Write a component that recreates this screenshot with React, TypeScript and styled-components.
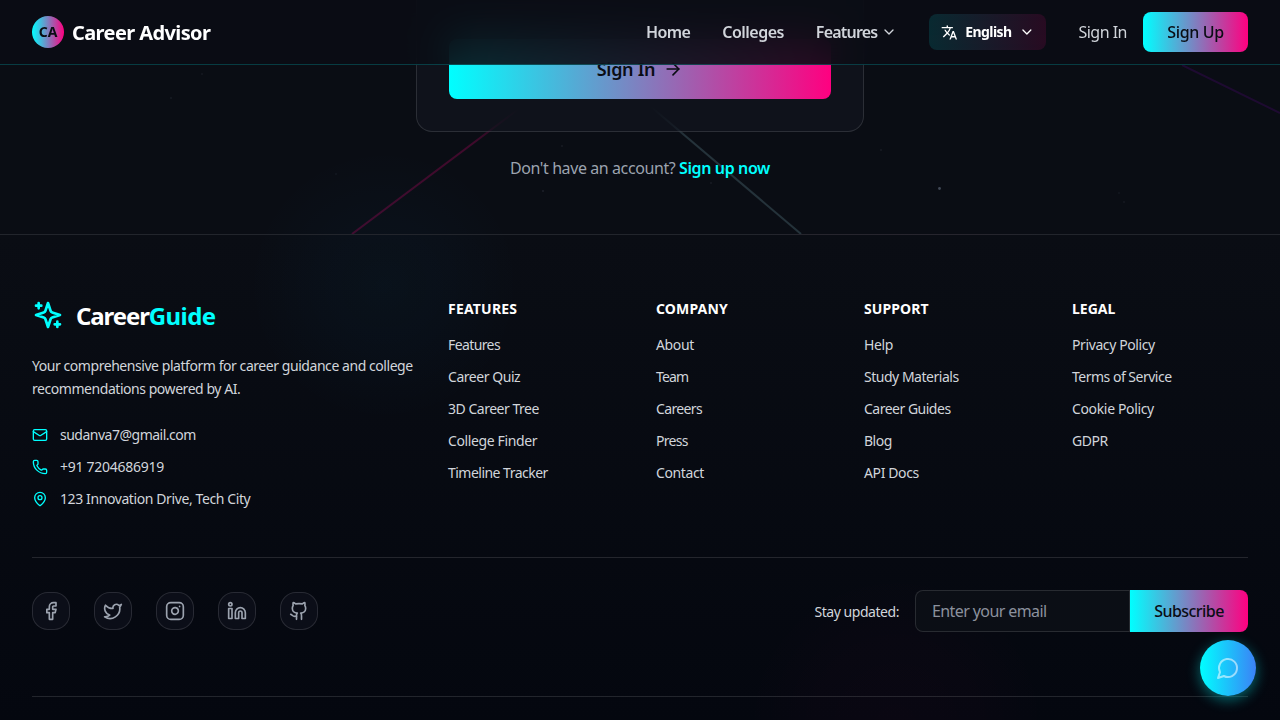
import React from "react";
import styled, { createGlobalStyle } from "styled-components";
import {
  ArrowRight,
  ChevronDown,
  Facebook,
  Github,
  Instagram,
  Linkedin,
  Mail,
  MapPin,
  Phone,
  Twitter,
} from "lucide-react";
import { MdTranslate } from "react-icons/md";

const Global = createGlobalStyle`
  *, *::before, *::after { box-sizing: border-box; }
  html, body { margin: 0; padding: 0; background: #0a0d14; }
  body {
    height: 720px;
    overflow: hidden;
    font-family: "Segoe UI", "Noto Sans", "Open Sans", sans-serif;
    color: #fff;
  }
  a { color: inherit; text-decoration: none; }
  button, input { font-family: inherit; }
  ul { list-style: none; margin: 0; padding: 0; }
  h3, p { margin: 0; }
`;

const gradient = "linear-gradient(90deg, #00ffff, #ff0080)";

const T = styled.span<{ $ls?: number }>`
  letter-spacing: ${(p) => p.$ls ?? 0}px;
  white-space: nowrap;
`;

const Page = styled.div`
  position: relative;
  height: 720px;
  overflow: hidden;
  display: flex;
  flex-direction: column;
  background: #0a0d14;
`;

const Header = styled.header`
  position: relative;
  z-index: 5;
  flex: none;
  height: 65px;
  padding: 0 32px;
  display: flex;
  align-items: center;
  justify-content: space-between;
  background: rgba(10, 13, 20, 0.88);
  backdrop-filter: blur(20px);
  border-bottom: 1px solid rgba(0, 255, 255, 0.2);
`;

const Brand = styled.a`
  display: flex;
  align-items: center;
  gap: 8px;
  font-size: 20px;
  font-weight: 700;
  line-height: 28px;
  > span:last-child { padding-top: 2px; }
`;

const Monogram = styled.span`
  width: 32px;
  height: 32px;
  border-radius: 50%;
  display: flex;
  align-items: center;
  justify-content: center;
  background: ${gradient};
  color: #0a0d14;
  font-size: 14px;
`;

const Nav = styled.nav`
  display: flex;
  align-items: center;
`;

const NavLink = styled.a`
  display: flex;
  align-items: center;
  gap: 4px;
  margin-right: 32px;
  font-size: 16px;
  line-height: 24px;
  font-weight: 600;
  color: #d1d5db;
`;

const Language = styled.button`
  width: 117px;
  height: 36px;
  padding: 0 12px;
  border: 0;
  border-radius: 8px;
  display: flex;
  align-items: center;
  gap: 7px;
  color: #fff;
  font-size: 14px;
  font-weight: 700;
  background: linear-gradient(90deg, rgba(0, 255, 255, 0.12), rgba(255, 0, 128, 0.12));
  > span { padding-bottom: 1px; }
  svg:last-child { margin-left: auto; }
`;

const SignInLink = styled.a`
  margin: 0 16px 0 32px;
  font-size: 16px;
  color: #d1d5db;
`;

const SignUp = styled.a`
  width: 105px;
  height: 40px;
  border-radius: 8px;
  display: flex;
  align-items: center;
  justify-content: center;
  background: ${gradient};
  color: #0a0d14;
  font-size: 16px;
  font-weight: 500;
`;

const Hero = styled.main`
  position: relative;
  flex: none;
  height: 169px;
  display: flex;
  flex-direction: column;
  align-items: center;
`;

const Backdrop = styled.svg`
  position: absolute;
  left: 0;
  top: 0;
`;

const Card = styled.section`
  position: relative;
  flex: none;
  width: 448px;
  height: 152px;
  margin-top: -85px;
  padding: 0 32px 32px;
  display: flex;
  align-items: flex-end;
  border: 1px solid rgba(255, 255, 255, 0.12);
  border-radius: 0 0 16px 16px;
  background: rgba(19, 21, 31, 0.6);
`;

const SignInButton = styled.button`
  width: 100%;
  height: 60px;
  border: 0;
  border-radius: 8px;
  display: flex;
  align-items: center;
  justify-content: center;
  gap: 8px;
  background: ${gradient};
  color: #0a0d14;
  font-size: 18px;
  font-weight: 600;
`;

const AccountLine = styled.p`
  position: relative;
  margin-top: 24px;
  font-size: 16px;
  line-height: 24px;
  color: #9ca3af;
  a { color: #00ffff; font-weight: 600; }
`;

const Footer = styled.footer`
  position: relative;
  flex: 1;
  border-top: 1px solid rgba(255, 255, 255, 0.12);
  padding: 64px 32px 0;
  background:
    radial-gradient(circle 136px at 384px 50px, rgba(0, 160, 255, 0.035), rgba(0, 160, 255, 0.02) 50%, transparent),
    radial-gradient(circle 150px at 896px 490px, rgba(255, 0, 128, 0.025), rgba(255, 0, 128, 0.015) 55%, transparent),
    linear-gradient(180deg, #0a0d14, #04070f);
`;

const Columns = styled.div`
  display: grid;
  grid-template-columns: 384px repeat(4, 176px);
  column-gap: 32px;
  height: 258px;
`;

const FooterBrand = styled.div`
  display: flex;
  align-items: center;
  gap: 12px;
  height: 32px;
  font-size: 24px;
  line-height: 32px;
  font-weight: 700;
  > span { padding-top: 2px; }
  em { font-style: normal; color: #00ffff; letter-spacing: -0.6px; }
`;

const Blurb = styled.p`
  margin-top: 23px;
  font-size: 14px;
  line-height: 23px;
  color: #d1d5db;
`;

const Contacts = styled.ul`
  margin-top: 25px;
  display: flex;
  flex-direction: column;
  gap: 12px;
`;

const Contact = styled.li`
  display: flex;
  align-items: center;
  gap: 12px;
  height: 20px;
  font-size: 14px;
  line-height: 18px;
  color: #d1d5db;
  svg { color: #00ffff; }
  span { padding-bottom: 1px; }
`;

const ColumnTitle = styled.h3`
  font-size: 14px;
  line-height: 20px;
  font-weight: 700;
  color: #fff;
`;

const Links = styled.ul`
  margin-top: 16px;
  display: flex;
  flex-direction: column;
  gap: 12px;
`;

const LinkItem = styled.li`
  height: 20px;
  font-size: 14px;
  line-height: 20px;
  color: #d1d5db;
`;

const SocialRow = styled.div`
  display: flex;
  align-items: center;
  justify-content: space-between;
  height: 139px;
  padding: 32px 0 64px;
  border-top: 1px solid rgba(255, 255, 255, 0.12);
`;

const Socials = styled.div`
  display: flex;
  gap: 24px;
`;

const Social = styled.a`
  width: 38px;
  height: 38px;
  border-radius: 16px;
  border: 1px solid rgba(255, 255, 255, 0.12);
  background: rgba(17, 19, 31, 0.5);
  display: flex;
  align-items: center;
  justify-content: center;
  color: #9ca3af;
`;

const Newsletter = styled.form`
  display: flex;
  align-items: center;
  font-size: 14px;
  color: #d1d5db;
`;

const Email = styled.input`
  width: 215px;
  height: 42px;
  margin-left: 16px;
  padding: 0 16px;
  border: 1px solid rgba(255, 255, 255, 0.12);
  border-radius: 8px 0 0 8px;
  background: #0b0e15;
  font-size: 16px;
  color: #fff;
  letter-spacing: -0.6px;
  &::placeholder { color: #8b919d; opacity: 1; }
`;

const Subscribe = styled.button`
  width: 118px;
  height: 42px;
  padding: 0;
  border: 0;
  border-radius: 0 8px 8px 0;
  background: ${gradient};
  color: #0a0d14;
  font-size: 16px;
  font-weight: 500;
`;

const Divider = styled.div`
  height: 1px;
  background: rgba(255, 255, 255, 0.12);
`;

const ChatButton = styled.button`
  position: absolute;
  z-index: 6;
  right: 24px;
  bottom: 24px;
  width: 56px;
  height: 56px;
  padding: 0;
  border: 0;
  border-radius: 50%;
  display: flex;
  align-items: center;
  justify-content: center;
  color: rgba(255, 255, 255, 0.55);
  background: linear-gradient(90deg, #00ffff, #3b82f6);
  box-shadow: 0 4px 14px rgba(0, 255, 255, 0.4);
`;

const groups: { title: string; ls: number; links: [string, number][] }[] = [
  {
    title: "FEATURES",
    ls: 0.2,
    links: [["Features", -0.6], ["Career Quiz", -0.45], ["3D Career Tree", -0.48], ["College Finder", -0.38], ["Timeline Tracker", -0.52]],
  },
  {
    title: "COMPANY",
    ls: 0.15,
    links: [["About", -0.35], ["Team", -0.85], ["Careers", -0.65], ["Press", -0.7], ["Contact", -0.38]],
  },
  {
    title: "SUPPORT",
    ls: 0.1,
    links: [["Help", -0.4], ["Study Materials", -0.48], ["Career Guides", -0.5], ["Blog", -0.5], ["API Docs", -0.38]],
  },
  {
    title: "LEGAL",
    ls: 0,
    links: [["Privacy Policy", -0.4], ["Terms of Service", -0.5], ["Cookie Policy", -0.35], ["GDPR", -0.5]],
  },
];

const dots = [
  [202, 9, 1, 0.07], [171, 33, 0.7, 0.18], [562, 81, 0.8, 0.15], [543, 126, 0.8, 0.2],
  [711, 118, 0.8, 0.15], [881, 85, 0.8, 0.15], [939.5, 123.5, 1.4, 0.35], [1119, 128, 0.8, 0.1],
  [1124, 137, 0.8, 0.12], [336, 109, 0.8, 0.1],
];

function HeroBackdrop() {
  return (
    <Backdrop width="1280" height="169" viewBox="0 0 1280 169" fill="none">
      <defs>
        <linearGradient id="pink" gradientUnits="userSpaceOnUse" x1="520" y1="43" x2="475" y2="77">
          <stop stopColor="#ff0080" stopOpacity="0" />
          <stop offset="1" stopColor="#ff0080" stopOpacity="0.22" />
        </linearGradient>
        <linearGradient id="teal" gradientUnits="userSpaceOnUse" x1="650" y1="41" x2="685" y2="71">
          <stop stopColor="#8fc8d4" stopOpacity="0" />
          <stop offset="1" stopColor="#8fc8d4" stopOpacity="0.2" />
        </linearGradient>
        <radialGradient id="glow" gradientUnits="userSpaceOnUse" cx="384" cy="220" r="136">
          <stop stopColor="#00a0ff" stopOpacity="0.035" />
          <stop offset="0.5" stopColor="#00a0ff" stopOpacity="0.02" />
          <stop offset="1" stopColor="#00a0ff" stopOpacity="0" />
        </radialGradient>
      </defs>
      <rect width="1280" height="169" fill="url(#glow)" />
      <path d="M520 43 352 169" stroke="url(#pink)" strokeWidth="2" />
      <path d="M650 41 801 169" stroke="url(#teal)" strokeWidth="2" />
      <path d="M1182 0 1280 48" stroke="#7a00b8" strokeOpacity="0.18" strokeWidth="2" />
      {dots.map(([cx, cy, r, o]) => (
        <circle key={`${cx}-${cy}`} cx={cx} cy={cy} r={r} fill="#a9b8d0" fillOpacity={o} />
      ))}
    </Backdrop>
  );
}

function Sparkles() {
  return (
    <svg width="32" height="32" viewBox="0 0 24 24" fill="none" stroke="#00ffff" strokeWidth="2" strokeLinecap="round" strokeLinejoin="round">
      <path d="m12 3-1.912 5.813a2 2 0 0 1-1.275 1.275L3 12l5.813 1.912a2 2 0 0 1 1.275 1.275L12 21l1.912-5.813a2 2 0 0 1 1.275-1.275L21 12l-5.813-1.912a2 2 0 0 1-1.275-1.275L12 3Z" />
      <path d="M5 3v4M19 17v4M3 5h4M17 19h4" />
    </svg>
  );
}

export default function App() {
  return (
    <Page>
      <Global />
      <Header>
        <Brand href="#">
          <Monogram><T $ls={-0.2}>CA</T></Monogram>
          <T $ls={-0.6}>Career Advisor</T>
        </Brand>
        <Nav>
          <NavLink href="#"><T $ls={-0.6}>Home</T></NavLink>
          <NavLink href="#"><T $ls={-0.52}>Colleges</T></NavLink>
          <NavLink href="#"><T $ls={-0.8}>Features</T><ChevronDown size={16} /></NavLink>
          <Language>
            <MdTranslate size={17} />
            <T $ls={-0.55}>English</T>
            <ChevronDown size={16} />
          </Language>
          <SignInLink href="#"><T $ls={-0.5}>Sign In</T></SignInLink>
          <SignUp href="#"><T $ls={-0.35}>Sign Up</T></SignUp>
        </Nav>
      </Header>
      <Hero>
        <HeroBackdrop />
        <Card>
          <SignInButton><T $ls={-0.3}>Sign In</T><ArrowRight size={20} /></SignInButton>
        </Card>
        <AccountLine>
          <T $ls={-0.41}>Don't have an account? </T>
          <a href="#"><T $ls={-0.38}>Sign up now</T></a>
        </AccountLine>
      </Hero>
      <Footer>
        <Columns>
          <div>
            <FooterBrand><Sparkles /><T $ls={-1.1}>Career<em>Guide</em></T></FooterBrand>
            <Blurb>
              <T $ls={-0.445}>Your comprehensive platform for career guidance and college</T><br />
              <T $ls={-0.45}>recommendations powered by AI.</T>
            </Blurb>
            <Contacts>
              <Contact><Mail size={16} /><T $ls={-0.5}>sudanva7@gmail.com</T></Contact>
              <Contact><Phone size={16} /><T $ls={-0.27}>+91 7204686919</T></Contact>
              <Contact><MapPin size={16} /><T $ls={-0.4}>123 Innovation Drive, Tech City</T></Contact>
            </Contacts>
          </div>
          {groups.map((g) => (
            <div key={g.title}>
              <ColumnTitle><T $ls={g.ls}>{g.title}</T></ColumnTitle>
              <Links>
                {g.links.map(([label, ls]) => (
                  <LinkItem key={label}><a href="#"><T $ls={ls}>{label}</T></a></LinkItem>
                ))}
              </Links>
            </div>
          ))}
        </Columns>
        <SocialRow>
          <Socials>
            {[Facebook, Twitter, Instagram, Linkedin, Github].map((Icon, i) => (
              <Social href="#" key={i}><Icon size={20} /></Social>
            ))}
          </Socials>
          <Newsletter>
            <T $ls={-0.45}>Stay updated:</T>
            <Email placeholder="Enter your email" />
            <Subscribe type="button"><T $ls={-0.55}>Subscribe</T></Subscribe>
          </Newsletter>
        </SocialRow>
        <Divider />
      </Footer>
      <ChatButton aria-label="Chat">
        <svg width="24" height="24" viewBox="0 0 24 24" fill="none" stroke="currentColor" strokeWidth="2" strokeLinecap="round" strokeLinejoin="round">
          <path d="M7.9 20A9 9 0 1 0 4 16.1L2 22Z" />
        </svg>
      </ChatButton>
    </Page>
  );
}
